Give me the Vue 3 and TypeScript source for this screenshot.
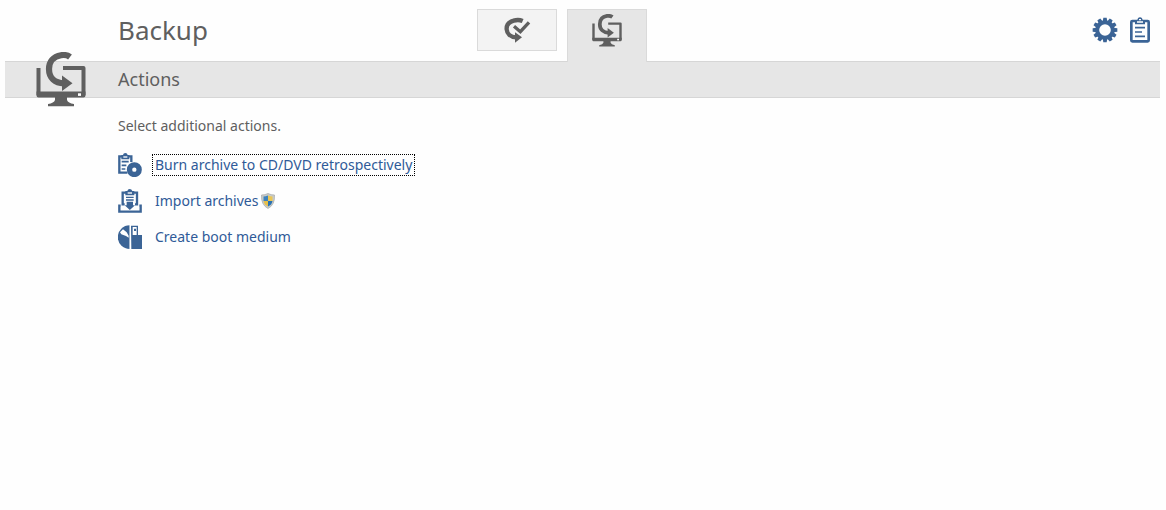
<script setup lang="ts">
import { ref } from 'vue'

type View = 'tasks' | 'actions'
const view = ref<View>('actions')

interface Action {
  id: 'burn' | 'import' | 'boot'
  label: string
  elevated: boolean
}

const actions: Action[] = [
  { id: 'burn', label: 'Burn archive to CD/DVD retrospectively', elevated: false },
  { id: 'import', label: 'Import archives', elevated: true },
  { id: 'boot', label: 'Create boot medium', elevated: false },
]

const teeth = Array.from({ length: 12 }, (_, i) => i * 30)
</script>

<template>
  <div class="page">
    <svg class="defs" aria-hidden="true">
      <symbol id="monitor" viewBox="0 0 50 55">
        <path d="M2.500 43V16M27 16H47.500V43" fill="none" stroke="currentColor" stroke-width="4" stroke-linejoin="round" />
        <path d="M.5 39.500H49.500V43.500Q49.500 45.500 47.500 45.500H2.500Q.5 45.500 .5 43.500Z" fill="currentColor" />
        <path d="M19 45H31V48Q32 51 38 52V54.200H12V52Q18 51 19 48Z" fill="currentColor" />
        <rect x="42" y="41.300" width="3" height="2.600" fill="#fff" />
        <path d="M34 5C31 2.700 28 2.700 25 3.200C17 4.500 13 10 13 17C13 26 19 31 28 31.300" fill="none" stroke="currentColor" stroke-width="6.200" />
        <path d="M26 23.500L36.500 31.300L26 39Z" fill="currentColor" />
      </symbol>
    </svg>

    <header class="top">
      <h1>Backup</h1>
      <nav class="tabs" aria-label="Backup views">
        <button class="tab" :class="{ active: view === 'tasks' }" type="button" aria-label="Tasks" @click="view = 'tasks'">
          <svg class="i28" viewBox="130 48 84 84" fill="none" stroke="currentColor">
            <path d="M189 63C180 59 171 59 162 62C148 66 140 76 141 88C142 101 152 111 169 112" stroke-width="13" />
            <path d="M166 97L187 112L166 128Z" fill="currentColor" stroke="none" />
            <path d="M163 79L182 95L208 67" stroke-width="10" />
          </svg>
        </button>
        <button class="tab" :class="{ active: view === 'actions' }" type="button" aria-label="Actions" @click="view = 'actions'">
          <svg class="small-monitor"><use href="#monitor" /></svg>
        </button>
      </nav>
      <div class="tools">
        <button class="tool" type="button" aria-label="Settings">
          <svg class="gear" viewBox="66 52 78 78">
            <g fill="currentColor">
              <path v-for="a in teeth" :key="a" d="M98 66L100 54H110L112 66Z" :transform="`rotate(${a} 105 91)`" />
            </g>
            <circle cx="105" cy="91" r="23.500" fill="none" stroke="currentColor" stroke-width="12" />
          </svg>
        </button>
        <button class="tool" type="button" aria-label="Log">
          <svg class="clip" viewBox="180 52 60 78" fill="none" stroke="currentColor">
            <rect x="184" y="64" width="52" height="61" rx="3" stroke-width="8" />
            <path d="M195 74V62H202Q203 53 210 53T218 62H225V74Z" fill="currentColor" stroke="none" />
            <path d="M201 67H219M207 60H213" stroke="#fff" stroke-width="4" />
            <path d="M195 84H225M195 97H216M195 110H225" stroke-width="5" />
          </svg>
        </button>
      </div>
    </header>

    <div class="bar">
      <svg class="big-monitor" aria-hidden="true"><use href="#monitor" /></svg>
      <h2>Actions</h2>
    </div>

    <main>
      <p>Select additional actions.</p>
      <ul>
        <li v-for="(action, i) in actions" :key="action.id">
          <svg v-if="action.id === 'burn'" class="i24" viewBox="22 126 72 72" fill="none" stroke="currentColor">
            <path d="M50 185H26V136H62V153" stroke-width="7" />
            <path d="M32 145V132H37Q38 126 44 126T51 132H56V145Z" fill="currentColor" stroke="none" />
            <path d="M38 138H50" stroke="#fff" stroke-width="4" />
            <path d="M33 152H54M33 163H47M33 174H44" stroke-width="5" />
            <circle cx="71" cy="176" r="14.500" stroke-width="16" />
          </svg>
          <svg v-else-if="action.id === 'import'" class="i24" viewBox="22 235 72 72" fill="none" stroke="currentColor">
            <path d="M42 281H36V246H79V281H73" stroke-width="7" />
            <path d="M44 254V241H50Q51 235 57 235T65 241H71V254Z" fill="currentColor" stroke="none" />
            <path d="M51 247H64" stroke="#fff" stroke-width="4" />
            <path d="M46 260H69M46 268H69" stroke-width="4" />
            <path d="M48 273H67V284H73L57.500 298L42 284H48Z" fill="currentColor" stroke="none" />
            <path d="M30 285H26V303H90V285H86" stroke-width="7" />
          </svg>
          <svg v-else class="i24" viewBox="22 344 72 72">
            <path d="M57 345V416A35.500 35.500 0 0 1 57 345Z" fill="currentColor" />
            <path d="M28 366L37 357L48 366L54 376V382L46 377L32 372Z" fill="#fff" />
            <path d="M61 346H82V374H94V416H62Z" fill="currentColor" />
            <path d="M66 350H78V374H66Z" fill="#fff" />
            <path d="M70 355H76V362H70Z" fill="currentColor" />
            <path d="M59 344V416" stroke="#fff" stroke-width="4" />
          </svg>
          <a href="#" :class="{ focused: i === 0 }" @click.prevent>{{ action.label }}</a>
          <svg v-if="action.elevated" class="shield" viewBox="0 0 14 16" role="img" aria-label="Requires administrator rights">
            <path d="M7 .5Q10 2 13.500 2Q14 12 7 15.500Q0 12 .5 2Q4 2 7 .5Z" fill="#c9cbc8" stroke="#a3a7a8" stroke-width=".7" />
            <path d="M7 2.500Q4.500 3.500 2.500 3.500V8H7Z" fill="#3c82bd" />
            <path d="M7 2.500Q9.500 3.500 11.500 3.500V8H7Z" fill="#eac653" />
            <path d="M2.500 8H7V13.500Q3.200 12 2.500 8Z" fill="#e6bf4b" />
            <path d="M11.500 8H7V13.500Q10.800 12 11.500 8Z" fill="#2872b2" />
          </svg>
        </li>
      </ul>
    </main>
  </div>
</template>

<style>
body {
  margin: 0;
  background: #fefefe;
}
</style>

<style scoped>
.page {
  padding: 0 6px 0 5px;
  color: #5f5f5f;
  font-family: "Noto Sans", "Open Sans", sans-serif;
  font-size: 14px;
}
.defs {
  position: absolute;
  width: 0;
  height: 0;
}
svg {
  display: block;
  flex: none;
}
h1, h2, p, ul {
  margin: 0;
  padding: 0;
  font-weight: 400;
}
button {
  padding: 0;
  border: 0;
  background: none;
  color: inherit;
}
.top {
  display: grid;
  grid-template-columns: 359px 1fr auto;
  height: 61px;
  padding-left: 113px;
}
h1 {
  padding-top: 12px;
  font-size: 26px;
  line-height: 36px;
}
.tabs {
  display: flex;
  align-items: flex-start;
  gap: 10px;
  padding-top: 9px;
}
.tab {
  display: flex;
  justify-content: center;
  box-sizing: border-box;
  width: 80px;
  height: 42px;
  padding-top: 6px;
  border: 1px solid #dadada;
  background: #f3f3f3;
}
.tab.active {
  position: relative;
  z-index: 1;
  height: 53px;
  padding-top: 4px;
  border-bottom: 0;
  background: #e6e6e6;
}
.i28 {
  width: 28px;
  height: 28px;
}
.small-monitor {
  width: 30px;
  height: 33px;
}
.tools {
  display: flex;
  align-items: flex-start;
  gap: 12px;
  padding: 17px 10px 0 0;
  color: #3b6496;
}
.gear {
  width: 26px;
  height: 26px;
}
.clip {
  width: 20px;
  height: 26px;
}
.bar {
  position: relative;
  padding-left: 113px;
  border-top: 1px solid #d6d6d6;
  border-bottom: 1px solid #d6d6d6;
  background: #e6e6e6;
}
.big-monitor {
  position: absolute;
  left: 31px;
  top: -10px;
  width: 50px;
  height: 55px;
}
h2 {
  font-size: 18px;
  line-height: 35px;
}
main {
  padding: 18px 0 0 113px;
}
p {
  line-height: 20px;
}
ul {
  display: grid;
  gap: 12px;
  margin-top: 17px;
  list-style: none;
}
li {
  display: flex;
  align-items: center;
  height: 24px;
  color: #3b6496;
}
.i24 {
  width: 24px;
  height: 24px;
}
a {
  margin-left: 11px;
  padding: 0 2px;
  color: #2f5a98;
  line-height: 20px;
  text-decoration: none;
}
.focused {
  outline: 1px dotted #000;
}
.shield {
  width: 14px;
  height: 16px;
  margin-left: 1px;
}
</style>
